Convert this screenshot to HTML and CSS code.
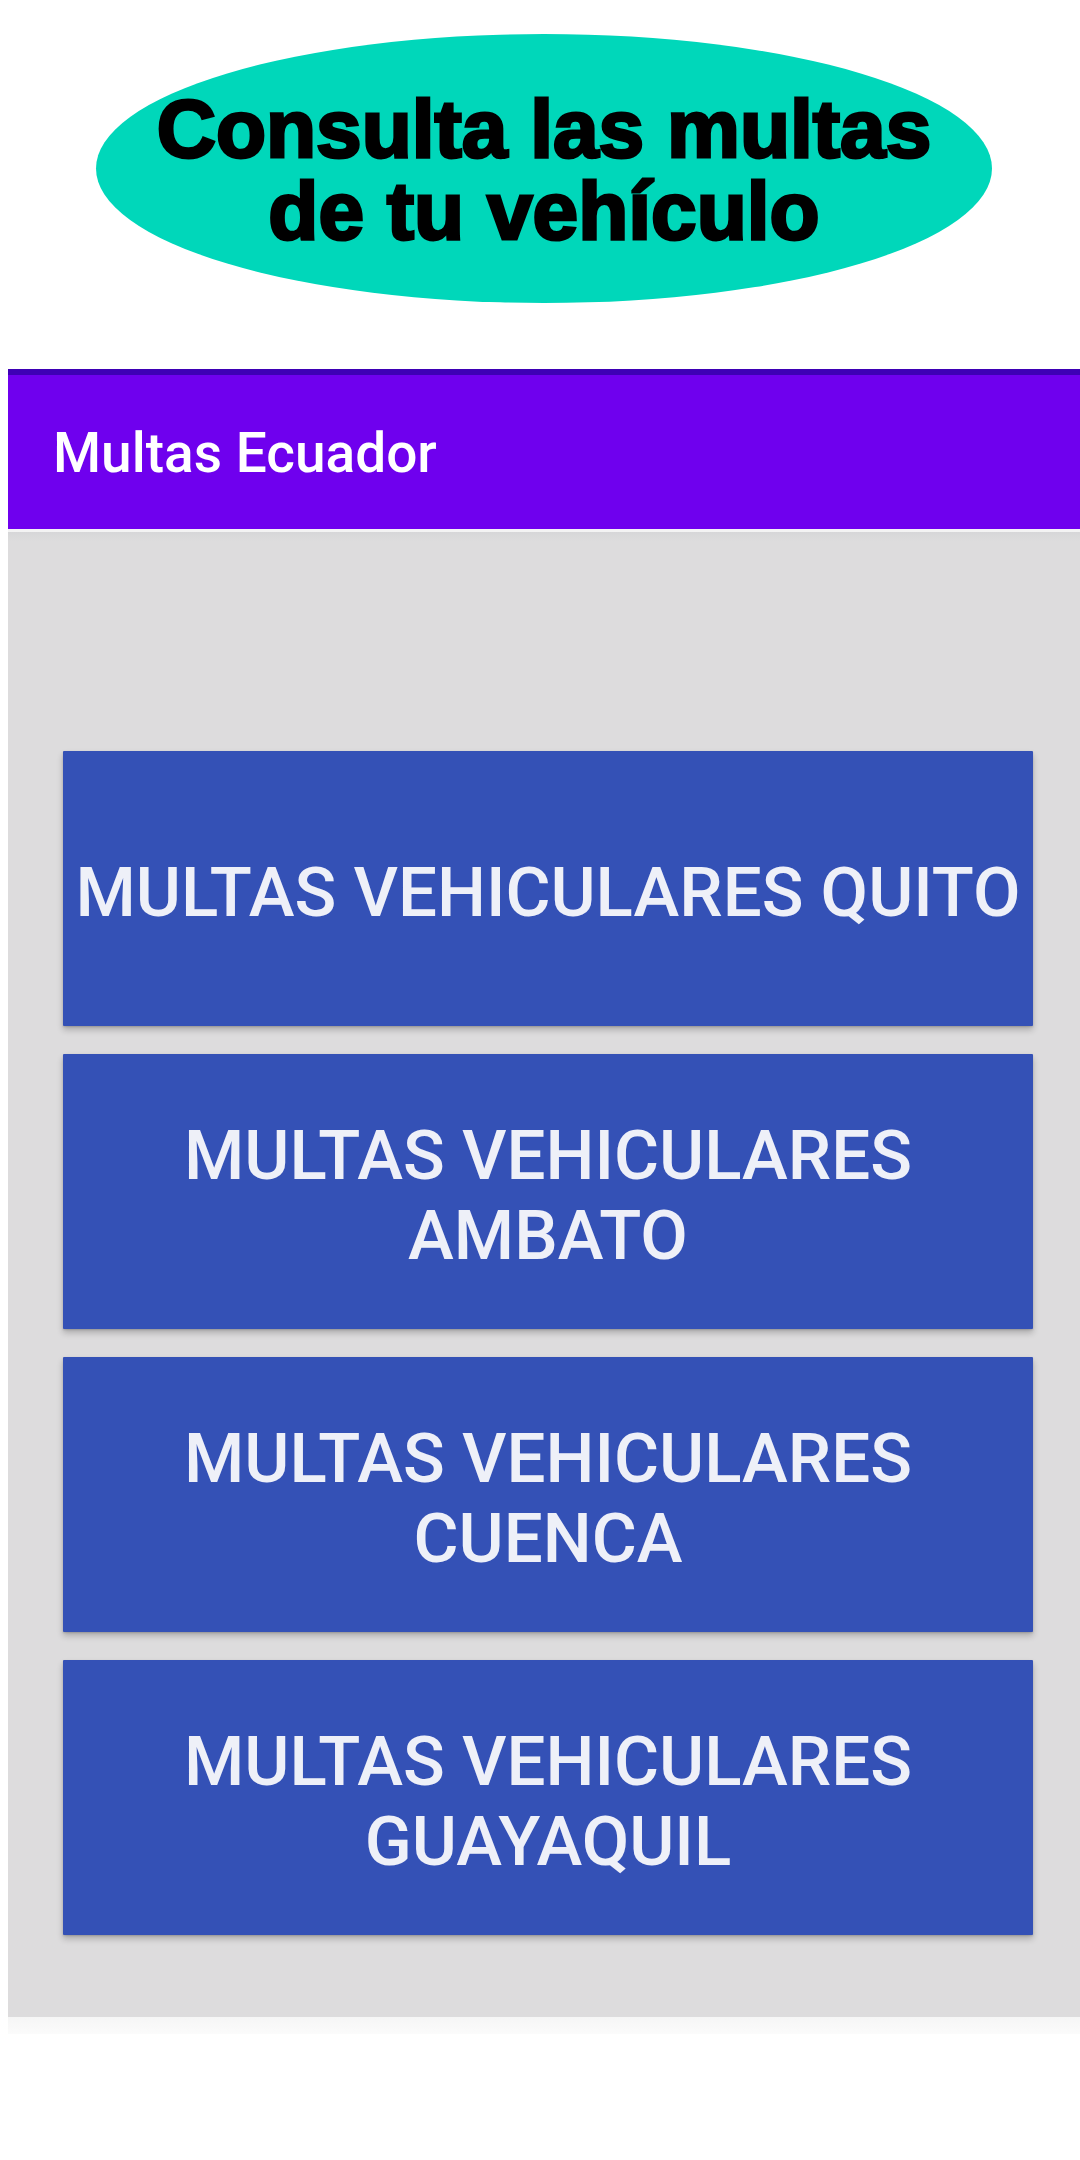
FILE: index.html
```html
<!DOCTYPE html>
<html lang="es">
<head>
<meta charset="utf-8">
<title>Multas Ecuador</title>
<link rel="stylesheet" href="styles.css">
</head>
<body>
<header class="hero">
  <div class="oval">
    <h1 class="oval-text">Consulta las multas<br>de tu vehículo</h1>
  </div>
</header>
<section class="app">
  <div class="statusbar"></div>
  <div class="appbar"><span class="appbar-title">Multas Ecuador</span></div>
  <div class="divider"></div>
  <main class="content">
    <button class="city-btn">MULTAS VEHICULARES QUITO</button>
    <button class="city-btn">MULTAS VEHICULARES<br>AMBATO</button>
    <button class="city-btn">MULTAS VEHICULARES<br>CUENCA</button>
    <button class="city-btn">MULTAS VEHICULARES<br>GUAYAQUIL</button>
  </main>
  <div class="navstrip"></div>
</section>
</body>
</html>
```

FILE: styles.css
```css
* { box-sizing: border-box; }
html, body { margin: 0; padding: 0; background: #ffffff; }
body { width: 1080px; height: 2160px; overflow: hidden; font-family: Roboto, "Liberation Sans", sans-serif; }

.hero {
  height: 369px;
  padding-top: 34px;
  padding-left: 96px;
}
.oval {
  width: 896px;
  height: 269px;
  border-radius: 50%;
  background: #00d7ba;
  display: flex;
  align-items: center;
  justify-content: center;
}
.oval-text {
  margin: 0;
  padding-top: 2px;
  font-family: "Liberation Sans", Arial, sans-serif;
  font-weight: 700;
  font-size: 82px;
  line-height: 82px;
  text-align: center;
  color: #000;
  -webkit-text-stroke: 3px #000;
}

.app { margin-left: 8px; }
.statusbar { height: 6px; background: #3e00b5; }
.appbar {
  height: 154px;
  background: #6f00ee;
  display: flex;
  align-items: center;
  padding-left: 45px;
}
.appbar-title {
  color: #ffffff;
  font-size: 55px;
  font-weight: 500;
  padding-top: 2px;
}
.divider { height: 3px; background: #f3f3f3; }

.content {
  background: linear-gradient(#d6d6d8 0, #dadadb 5px, #dddcdd 10px);
  padding: 219px 47px 82px 55px;
  display: flex;
  flex-direction: column;
  gap: 28px;
}
.city-btn {
  height: 275px;
  border: none;
  border-radius: 1px;
  background: #3451b6;
  color: #eef0f8;
  font-family: Roboto, "Liberation Sans", sans-serif;
  font-size: 69px;
  font-weight: 500;
  line-height: 80px;
  text-align: center;
  padding: 8px 6px 0;
  box-shadow: 0 4px 6px rgba(0,0,0,0.22), 0 1px 2px rgba(0,0,0,0.15);
}
.navstrip {
  height: 17px;
  background: linear-gradient(#f6f6f6, #fbfbfb);
}
```
